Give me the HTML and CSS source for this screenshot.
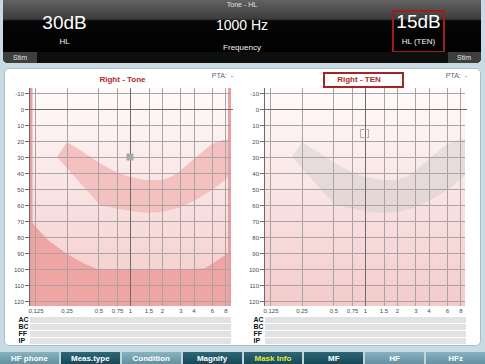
FILE: index.html
```html
<!DOCTYPE html>
<html>
<head>
<meta charset="utf-8">
<title>Tone - HL</title>
<link rel="stylesheet" href="styles.css">
</head>
<body>
<div class="screen">
  <header class="hdr">
    <div class="hdr-title">Tone - HL</div>
    <div class="hdr-main">
      <div class="readout readout-left">
        <div class="big">30dB</div>
        <div class="small small-left">HL</div>
      </div>
      <div class="readout readout-center">
        <div class="mid">1000 Hz</div>
        <div class="small small-center">Frequency</div>
      </div>
      <div class="readout readout-right">
        <div class="boxed">
          <div class="big">15dB</div>
          <div class="small small-right">HL (TEN)</div>
        </div>
      </div>
    </div>
    <div class="hdr-stim">
      <span class="stim stim-left">Stim</span>
      <span class="stim stim-right">Stim</span>
    </div>
  </header>

  <main class="panel">
    <section class="chart">
      <div class="chart-head">
        <div class="title">Right - Tone</div>
        <div class="pta">PTA:&nbsp; -</div>
      </div>
      <svg class="plot" viewBox="0 0 235 230" width="235" height="230">
        <defs>
          <linearGradient id="bgL" x1="0" y1="0" x2="0" y2="1">
            <stop offset="0" stop-color="#fffbfb"/>
            <stop offset="1" stop-color="#f4c9c9"/>
          </linearGradient>
        </defs>
        <rect x="24.5" y="2" width="201.5" height="218" fill="url(#bgL)"/>
        <path d="M52,71 L62,56 L78,66 L93,76 L109,85 L125,91 L141,94 L157,94 L166,91 L175,85 L190,72 L207,58 L218,54 L226,53 L226,89 L215,98 L207,104 L189,115 L173,122 L157,126 L141,127 L125,125 L109,122 L95,119 Z" fill="#f4c0c0"/>
        <path d="M24.5,134 L43,154 L62,168 L78,177 L93,183.5 L189,183.5 L200,182 L210,176 L226,165 L226,220 L24.5,220 Z" fill="#f0a5a4"/>
        <rect x="24.5" y="2" width="3" height="218" fill="#eaa0a0"/>
        <rect x="223" y="2" width="3" height="218" fill="#eaa0a0"/>
        <g stroke="#a9a3a3" stroke-width="1" shape-rendering="crispEdges" fill="none">
          <path d="M24.5,7.5H226M24.5,39.5H226M24.5,55.5H226M24.5,71.5H226M24.5,87.5H226M24.5,103.5H226M24.5,119.5H226M24.5,135.5H226M24.5,151.5H226M24.5,167.5H226M24.5,183.5H226M24.5,199.5H226M24.5,215.5H226"/>
          <path d="M30.5,2V220M62.5,2V220M93.5,2V220M112.5,2V220M144.5,2V220M157.5,2V220M175.5,2V220M189.5,2V220M207.5,2V220M220.5,2V220"/>
        </g>
        <g stroke="#6f6a6a" stroke-width="1" shape-rendering="crispEdges" fill="none">
          <path d="M24.5,23.5H228M125.5,2V220"/>
          <path d="M24.5,2V220"/>
          <path d="M20,7.5H24.5M20,23.5H24.5M20,39.5H24.5M20,55.5H24.5M20,71.5H24.5M20,87.5H24.5M20,103.5H24.5M20,119.5H24.5M20,135.5H24.5M20,151.5H24.5M20,167.5H24.5M20,183.5H24.5M20,199.5H24.5M20,215.5H24.5"/>
        </g>
        <rect x="121.5" y="67.5" width="7" height="7" fill="#a9a9a9"/>
        <g class="ylab" text-anchor="end">
          <text x="19" y="9.5">-10</text><text x="19" y="25.5">0</text><text x="19" y="41.5">10</text><text x="19" y="57.5">20</text><text x="19" y="73.5">30</text><text x="19" y="89.5">40</text><text x="19" y="105.5">50</text><text x="19" y="121.5">60</text><text x="19" y="137.5">70</text><text x="19" y="153.5">80</text><text x="19" y="169.5">90</text><text x="19" y="185.5">100</text><text x="19" y="201.5">110</text><text x="19" y="217.5">120</text>
        </g>
        <g class="xlab" text-anchor="middle">
          <text x="31" y="227">0,125</text><text x="62" y="227">0,25</text><text x="94" y="227">0,5</text><text x="112.5" y="227">0,75</text><text x="125.5" y="227">1</text><text x="144" y="227">1,5</text><text x="157.5" y="227">2</text><text x="176" y="227">3</text><text x="189" y="227">4</text><text x="207.5" y="227">6</text><text x="221" y="227">8</text>
        </g>
      </svg>
      <div class="table">
        <div class="row"><span class="lab">AC</span><span class="bar"></span></div>
        <div class="row"><span class="lab">BC</span><span class="bar"></span></div>
        <div class="row"><span class="lab">FF</span><span class="bar"></span></div>
        <div class="row"><span class="lab">IP</span><span class="bar"></span></div>
      </div>
    </section>

    <section class="chart">
      <div class="chart-head">
        <div class="title title-boxed">Right - TEN</div>
        <div class="pta pta-right">PTA:&nbsp; -</div>
      </div>
      <svg class="plot" viewBox="0 0 235 230" width="235" height="230">
        <defs>
          <linearGradient id="bgR" x1="0" y1="0" x2="0" y2="1">
            <stop offset="0" stop-color="#fffbfb"/>
            <stop offset="1" stop-color="#f4cbcb"/>
          </linearGradient>
        </defs>
        <rect x="24" y="2" width="201" height="218" fill="url(#bgR)"/>
        <path d="M52,71 L62,56 L78,66 L93,76 L109,85 L125,91 L141,94 L157,94 L166,91 L175,85 L190,72 L207,58 L218,54 L225,53 L225,89 L215,98 L207,104 L189,115 L173,122 L157,126 L141,127 L125,125 L109,122 L95,119 Z" fill="rgba(190,190,190,0.33)"/>
        <g stroke="#a9a3a3" stroke-width="1" shape-rendering="crispEdges" fill="none">
          <path d="M24,7.5H225M24,39.5H225M24,55.5H225M24,71.5H225M24,87.5H225M24,103.5H225M24,119.5H225M24,135.5H225M24,151.5H225M24,167.5H225M24,183.5H225M24,199.5H225M24,215.5H225"/>
          <path d="M30.5,2V220M62.5,2V220M93.5,2V220M112.5,2V220M144.5,2V220M157.5,2V220M175.5,2V220M189.5,2V220M207.5,2V220M220.5,2V220"/>
        </g>
        <g stroke="#6f6a6a" stroke-width="1" shape-rendering="crispEdges" fill="none">
          <path d="M24,23.5H227M125.5,2V220"/>
          <path d="M24.5,2V220"/>
          <path d="M20,7.5H24.5M20,23.5H24.5M20,39.5H24.5M20,55.5H24.5M20,71.5H24.5M20,87.5H24.5M20,103.5H24.5M20,119.5H24.5M20,135.5H24.5M20,151.5H24.5M20,167.5H24.5M20,183.5H24.5M20,199.5H24.5M20,215.5H24.5"/>
        </g>
        <rect x="120.5" y="43.5" width="8" height="8" fill="none" stroke="#b3b0b0" stroke-width="1"/>
        <g class="ylab" text-anchor="end">
          <text x="19" y="9.5">-10</text><text x="19" y="25.5">0</text><text x="19" y="41.5">10</text><text x="19" y="57.5">20</text><text x="19" y="73.5">30</text><text x="19" y="89.5">40</text><text x="19" y="105.5">50</text><text x="19" y="121.5">60</text><text x="19" y="137.5">70</text><text x="19" y="153.5">80</text><text x="19" y="169.5">90</text><text x="19" y="185.5">100</text><text x="19" y="201.5">110</text><text x="19" y="217.5">120</text>
        </g>
        <g class="xlab" text-anchor="middle">
          <text x="31" y="227">0,125</text><text x="62" y="227">0,25</text><text x="94" y="227">0,5</text><text x="112.5" y="227">0,75</text><text x="125.5" y="227">1</text><text x="144" y="227">1,5</text><text x="157.5" y="227">2</text><text x="176" y="227">3</text><text x="189" y="227">4</text><text x="207.5" y="227">6</text><text x="221" y="227">8</text>
        </g>
      </svg>
      <div class="table">
        <div class="row"><span class="lab">AC</span><span class="bar"></span></div>
        <div class="row"><span class="lab">BC</span><span class="bar"></span></div>
        <div class="row"><span class="lab">FF</span><span class="bar"></span></div>
        <div class="row"><span class="lab">IP</span><span class="bar"></span></div>
      </div>
    </section>
  </main>

  <nav class="btnbar">
    <div class="btn btn-light">HF phone</div>
    <div class="btn btn-dark">Meas.type</div>
    <div class="btn btn-light">Condition</div>
    <div class="btn btn-dark">Magnify</div>
    <div class="btn btn-dark btn-hl">Mask Info</div>
    <div class="btn btn-dark">MF</div>
    <div class="btn btn-light">HF</div>
    <div class="btn btn-light">HFz</div>
  </nav>
</div>
</body>
</html>
```

FILE: styles.css
```css
* { box-sizing: border-box; margin: 0; padding: 0; }
html, body { width: 485px; height: 364px; overflow: hidden; }
body {
  background: #c8dae2;
  font-family: "Liberation Sans", Arial, sans-serif;
}
.screen {
  width: 485px;
  height: 364px;
  display: flex;
  flex-direction: column;
  overflow: hidden;
}

/* header */
.hdr {
  margin: 0 4px 0 3px;
  height: 63px;
  flex: none;
  background: linear-gradient(#626262 0, #3c3c3c 19px, #050505 21px, #000 100%);
  border-radius: 0 0 5px 5px;
  display: flex;
  flex-direction: column;
  color: #fff;
  overflow: hidden;
}
.hdr-title {
  height: 10px;
  font-size: 7px;
  line-height: 10px;
  text-align: center;
  color: #e2e2e2;
}
.hdr-main {
  height: 42px;
  display: grid;
  grid-template-columns: 125px 1fr 125px;
}
.readout { text-align: center; }
.readout-left { padding-top: 3px; padding-right: 2px; }
.readout-center { padding-top: 6.5px; }
.readout-right { display: flex; justify-content: center; }
.big { font-size: 19px; line-height: 20px; }
.mid { font-size: 14px; line-height: 16px; }
.small { font-size: 8px; line-height: 10px; color: #f2f2f2; }
.small-left { margin-top: 3.5px; }
.small-center { margin-top: 10px; }
.small-right { margin-top: 5px; }
.boxed {
  width: 53px;
  height: 43px;
  border: 2px solid #a01c1c;
}
.hdr-stim {
  height: 11px;
  display: flex;
  justify-content: space-between;
  background: #0e0e0e;
}
.stim {
  font-size: 7px;
  line-height: 11px;
  color: #e4e4e4;
  background: #3e3e3e;
}
.stim-left { width: 34px; padding-left: 10px; }
.stim-right { width: 33px; text-align: right; padding-right: 10px; }

/* chart panel */
.panel {
  margin: 5px 4px 0 4px;
  height: 278px;
  flex: none;
  background: #fff;
  border: 1px solid #a8bfca;
  border-radius: 5px;
  display: flex;
  overflow: hidden;
}
.chart {
  width: 235px;
  flex: none;
  display: flex;
  flex-direction: column;
}
.chart-head {
  height: 17px;
  flex: none;
  display: grid;
  grid-template-columns: 1fr auto 1fr;
  align-items: start;
}
.title {
  grid-column: 2;
  font-size: 8px;
  font-weight: bold;
  color: #b02a2a;
  line-height: 10px;
  padding-top: 6px;
  white-space: nowrap;
}
.title-boxed {
  margin-top: 3px;
  margin-left: 12px;
  padding: 0 21px 0 12px;
  height: 16px;
  line-height: 12px;
  border: 2px solid #a52424;
}
.pta {
  grid-column: 3;
  justify-self: end;
  padding-right: 7px;
  padding-top: 1.5px;
  font-size: 7px;
  line-height: 10px;
  color: #4f6a8e;
  white-space: nowrap;
}
.pta-right { padding-right: 8px; }
.plot { display: block; flex: none; }
.ylab, .xlab {
  font-family: "Liberation Sans", Arial, sans-serif;
  font-size: 6px;
  fill: #4a4a4a;
}

/* measurement rows */
.table {
  margin-top: 1px;
  display: flex;
  flex-direction: column;
  gap: 1px;
}
.row {
  display: grid;
  grid-template-columns: 24.5px 201px;
  height: 6px;
  align-items: center;
}
.lab {
  padding-left: 13.5px;
  font-size: 7px;
  font-weight: bold;
  line-height: 6px;
  color: #111;
}
.bar {
  height: 6px;
  background: #e2e2e2;
}

/* button bar */
.btnbar {
  margin-top: 6px;
  height: 14px;
  flex: none;
  display: flex;
  gap: 2px;
  background: #c2d4dc;
}
.btn {
  flex: 1;
  font-size: 8px;
  font-weight: bold;
  color: #fff;
  text-align: center;
  line-height: 14px;
  white-space: nowrap;
}
.btn-light { background: linear-gradient(#88b2c0, #5c8b9b); }
.btn-dark { background: linear-gradient(#2e6777, #124451); }
.btn-hl { color: #e8e83a; }
```
